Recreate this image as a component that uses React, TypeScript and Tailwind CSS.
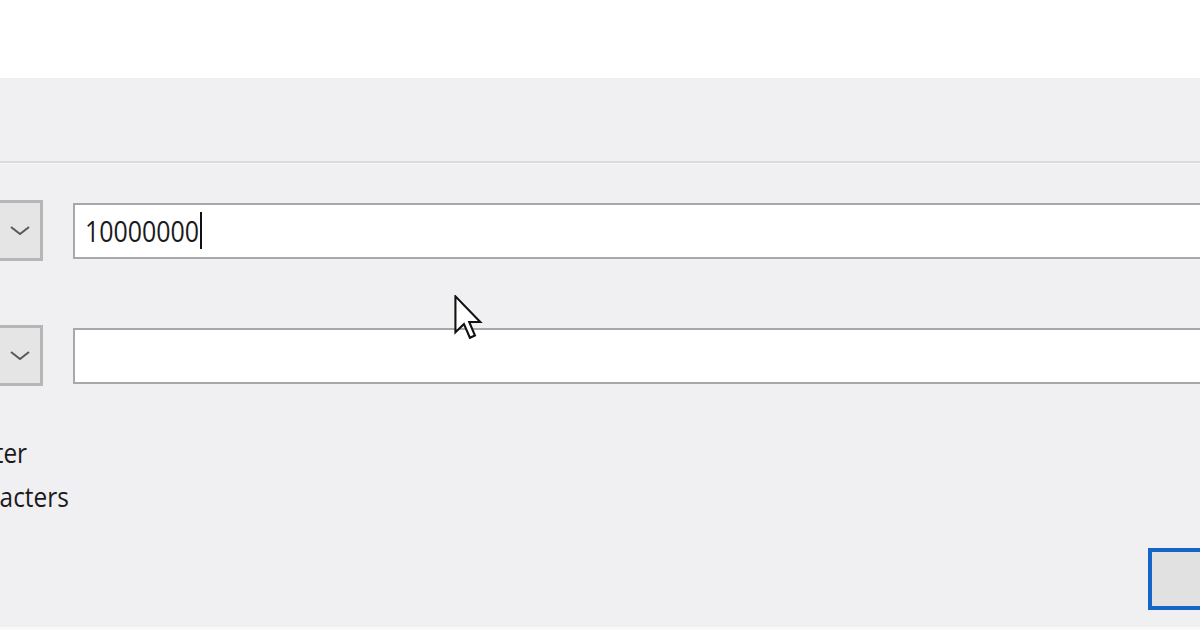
import React from "react";

function Chevron() {
  return (
    <svg width="20" height="9" viewBox="0 0 20 9" fill="none">
      <path d="M1 1 L10 8 L19 1" stroke="#585858" strokeWidth="2" />
    </svg>
  );
}

function Cursor() {
  return (
    <svg width="30" height="46" viewBox="0 0 13 20" className="absolute left-[454px] top-[295px]">
      <path
        d="M0.6 0.6 L0.6 16.2 L4.3 12.6 L6.9 18.6 L9.1 17.6 L6.6 11.7 L11.4 11.7 Z"
        fill="#ffffff"
        stroke="#111111"
        strokeWidth="0.9"
        strokeLinejoin="miter"
      />
    </svg>
  );
}

function Row({ value, caret }: { value?: string; caret?: boolean }) {
  return (
    <div className="flex items-center h-[61px]">
      <div className="w-[53px] h-[61px] -ml-[10px] pl-[10px] border-[3px] border-l-0 border-[#b6b6b6] bg-[#e5e5e5] flex items-center justify-center">
        <Chevron />
      </div>
      <div className="ml-[30px] flex-1 -mr-[40px] h-[56px] border-2 border-[#a8a8a8] bg-white flex items-center pl-[10px]">
        {value !== undefined && (
          <span
            className="inline-block origin-left scale-x-[0.86] text-[29px] leading-none text-[#1a1a1a] whitespace-nowrap"
            style={{ fontFamily: '"Open Sans", "Noto Sans", sans-serif' }}
          >
            {value}
          </span>
        )}
        {caret && <span className="-ml-[18px] w-[2px] h-[37px] bg-[#111111]" />}
      </div>
    </div>
  );
}

function Label({ text, width }: { text: string; width: number }) {
  return (
    <div className="h-[44px] flex justify-end overflow-hidden" style={{ width }}>
      <span
        className="inline-block origin-right scale-x-[0.87] text-[28px] leading-[44px] text-[#1a1a1a] whitespace-nowrap"
        style={{ fontFamily: '"Open Sans", "Noto Sans", sans-serif' }}
      >
        {text}
      </span>
    </div>
  );
}

export default function App() {
  return (
    <div className="relative w-[1200px] h-[630px] overflow-hidden bg-white">
      <div className="h-[78px] bg-white" />
      <div className="h-[549px] bg-[#f0eff1] flex flex-col">
        <div className="h-[83px]" />
        <div className="h-[2px] bg-[#dcdcdc]" />
        <div className="h-[1px] bg-[#f6f6f6]" />
        <div className="h-[36px]" />
        <Row value="10000000" caret />
        <div className="h-[64px]" />
        <Row />
        <div className="h-[44px]" />
        <Label text="Include special character" width={27} />
        <Label text="Avoid ambiguous characters" width={69} />
        <div className="h-[30px]" />
        <div className="flex justify-end">
          <div className="w-[60px] -mr-[8px] h-[62px] border-[4px] border-[#1565c8] bg-[#e1e1e1]" />
        </div>
      </div>
      <div className="h-[3px] bg-[#f8f8f8]" />
      <Cursor />
    </div>
  );
}
